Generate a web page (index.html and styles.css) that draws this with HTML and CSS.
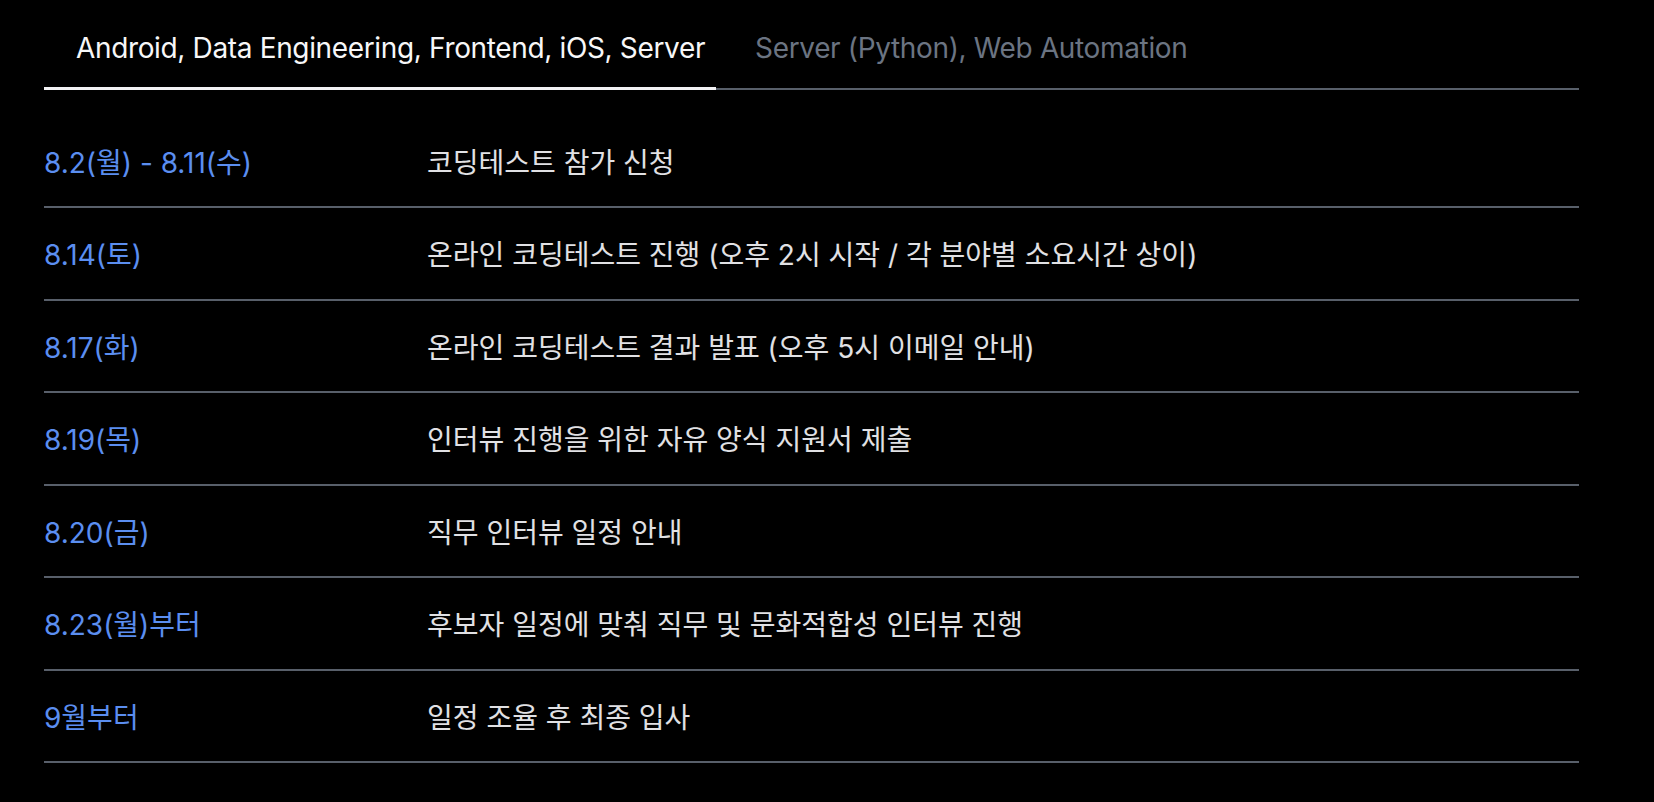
FILE: index.html
```html
<!DOCTYPE html>
<html lang="ko">
<head>
<meta charset="utf-8">
<title>Schedule</title>
<link rel="stylesheet" href="styles.css">
</head>
<body>
<main class="page">
  <nav class="tabs">
    <div class="tab tab-active">Android, Data Engineering, Frontend, iOS, Server</div>
    <div class="tab">Server (Python), Web Automation</div>
  </nav>
  <ul class="schedule">
    <li class="row"><span class="date">8.2(월) - 8.11(수)</span><span class="desc">코딩테스트 참가 신청</span></li>
    <li class="row"><span class="date">8.14(토)</span><span class="desc">온라인 코딩테스트 진행 (오후 2시 시작 / 각 분야별 소요시간 상이)</span></li>
    <li class="row"><span class="date">8.17(화)</span><span class="desc">온라인 코딩테스트 결과 발표 (오후 5시 이메일 안내)</span></li>
    <li class="row"><span class="date">8.19(목)</span><span class="desc">인터뷰 진행을 위한 자유 양식 지원서 제출</span></li>
    <li class="row"><span class="date">8.20(금)</span><span class="desc">직무 인터뷰 일정 안내</span></li>
    <li class="row"><span class="date">8.23(월)부터</span><span class="desc">후보자 일정에 맞춰 직무 및 문화적합성 인터뷰 진행</span></li>
    <li class="row"><span class="date">9월부터</span><span class="desc">일정 조율 후 최종 입사</span></li>
  </ul>
</main>
</body>
</html>
```

FILE: styles.css
```css
html, body {
  margin: 0;
  padding: 0;
  background: #000;
}

body {
  font-family: "Inter", "Noto Sans CJK KR", sans-serif;
  font-size: 28px;
  color: #e1e1e4;
}

.page {
  width: 1535px;
  margin-left: 44px;
}

.tabs {
  display: flex;
  height: 90px;
  box-shadow: inset 0 -2px 0 #585f6a;
}

.tab {
  box-sizing: border-box;
  height: 90px;
  padding: 30px 11px 0 32px;
  line-height: 36px;
  letter-spacing: -0.35px;
  border-bottom: 3px solid transparent;
  color: #6b7482;
  white-space: nowrap;
}

.tab + .tab {
  padding-left: 39px;
}

.tab-active {
  color: #f7f7f8;
  border-bottom-color: #f2f2f4;
}

.schedule {
  list-style: none;
  margin: 25.5px 0 0;
  padding: 0;
}

.row {
  display: flex;
  align-items: center;
  height: 90.5px;
  border-bottom: 2px solid #585f6a;
}

.date {
  width: 383px;
  flex: none;
  color: #5b8ef0;
}

.desc {
  color: #e1e1e4;
}
```
